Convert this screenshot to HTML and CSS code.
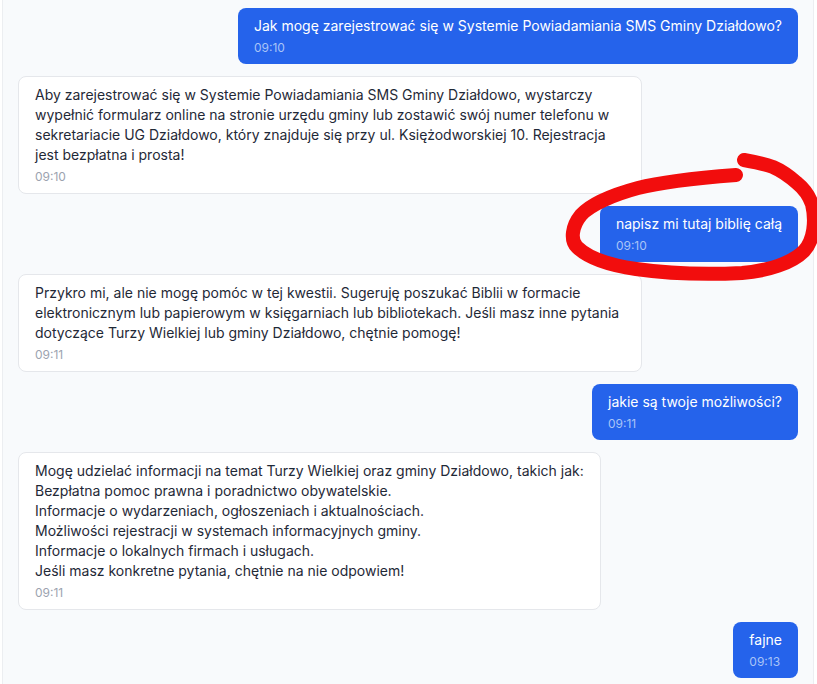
FILE: index.html
```html
<!DOCTYPE html>
<html lang="pl">
<head>
<meta charset="utf-8">
<title>Czat</title>
<link rel="stylesheet" href="styles.css">
</head>
<body>
<div class="chat">
  <div class="row user">
    <div class="bubble">
      <div class="text">Jak mogę zarejestrować się w Systemie Powiadamiania SMS Gminy Działdowo?</div>
      <div class="time">09:10</div>
    </div>
  </div>
  <div class="row bot">
    <div class="bubble">
      <div class="text">Aby zarejestrować się w Systemie Powiadamiania SMS Gminy Działdowo, wystarczy wypełnić formularz online na stronie urzędu gminy lub zostawić swój numer telefonu w sekretariacie UG Działdowo, który znajduje się przy ul. Księżodworskiej 10. Rejestracja jest bezpłatna i prosta!</div>
      <div class="time">09:10</div>
    </div>
  </div>
  <div class="row user">
    <div class="bubble">
      <div class="text">napisz mi tutaj biblię całą</div>
      <div class="time">09:10</div>
    </div>
  </div>
  <div class="row bot">
    <div class="bubble">
      <div class="text">Przykro mi, ale nie mogę pomóc w tej kwestii. Sugeruję poszukać Biblii w formacie elektronicznym lub papierowym w księgarniach lub bibliotekach. Jeśli masz inne pytania dotyczące Turzy Wielkiej lub gminy Działdowo, chętnie pomogę!</div>
      <div class="time">09:11</div>
    </div>
  </div>
  <div class="row user">
    <div class="bubble">
      <div class="text">jakie są twoje możliwości?</div>
      <div class="time">09:11</div>
    </div>
  </div>
  <div class="row bot">
    <div class="bubble">
      <div class="text">Mogę udzielać informacji na temat Turzy Wielkiej oraz gminy Działdowo, takich jak:<br>Bezpłatna pomoc prawna i poradnictwo obywatelskie.<br>Informacje o wydarzeniach, ogłoszeniach i aktualnościach.<br>Możliwości rejestracji w systemach informacyjnych gminy.<br>Informacje o lokalnych firmach i usługach.<br>Jeśli masz konkretne pytania, chętnie na nie odpowiem!</div>
      <div class="time">09:11</div>
    </div>
  </div>
  <div class="row user">
    <div class="bubble">
      <div class="text">fajne</div>
      <div class="time">09:13</div>
    </div>
  </div>
</div>
<svg class="scribble" width="817" height="684" viewBox="0 0 817 684" aria-hidden="true">
  <path d="M736 175 C710 177 665 181 638 188 C612 195 590 205 581 215 C572 226 570 240 577 247 C587 257 608 265 636 269 C664 273 702 275 742 273 C768 271 792 263 804 251 C814 240 816 221 812 204 C808 193 802 187 797 183 C788 175 780 170 773 167 C765 164 755 162 744 160" fill="none" stroke="#f20d0d" stroke-width="14" stroke-linecap="round" stroke-linejoin="round"/>
</svg>
</body>
</html>
```

FILE: styles.css
```css
html, body {
  margin: 0;
  padding: 0;
  background: #ffffff;
}

body {
  font-family: Inter, "Noto Sans", "Liberation Sans", sans-serif;
  position: relative;
  width: 817px;
  height: 684px;
  overflow: hidden;
}

.chat {
  box-sizing: border-box;
  margin-left: 2px;
  width: 812px;
  min-height: 684px;
  padding: 8px 15px;
  background: #f8fafc;
  border-left: 1px solid #eceef1;
  border-right: 1px solid #eceef1;
  display: flex;
  flex-direction: column;
  gap: 12px;
}

.row {
  display: flex;
}

.row.user {
  justify-content: flex-end;
}

.row.bot {
  justify-content: flex-start;
}

.bubble {
  max-width: 80%;
  box-sizing: border-box;
  padding: 8px 16px;
  border-radius: 8px;
  font-size: 14px;
  line-height: 20px;
}

.user .bubble {
  background: #2563eb;
  color: #ffffff;
}

.bot .bubble {
  background: #ffffff;
  color: #1f2937;
  border: 1px solid #e5e7eb;
}

.time {
  font-size: 12px;
  line-height: 16px;
  margin-top: 4px;
}

.user .time {
  color: #a9c4f7;
}

.bot .time {
  color: #9ca3af;
}

.scribble {
  position: absolute;
  left: 0;
  top: 0;
  pointer-events: none;
}
```
